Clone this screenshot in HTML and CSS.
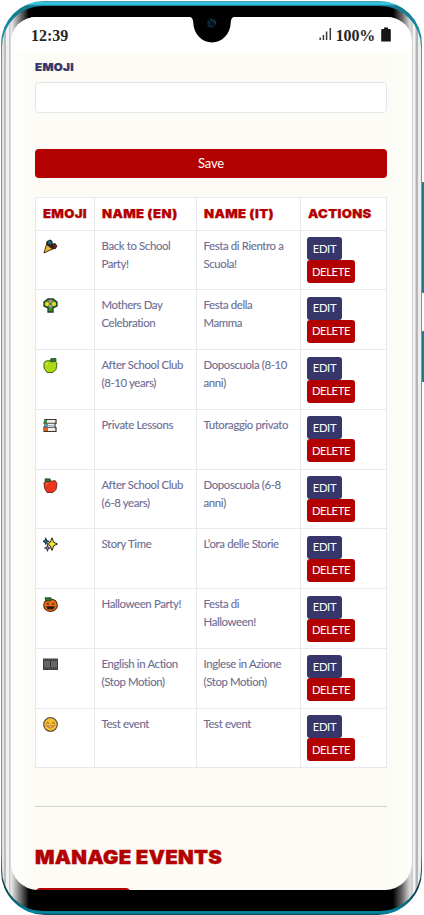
FILE: index.html
```html
<!DOCTYPE html>
<html lang="en">
<head>
<meta charset="utf-8">
<title>Manage Events</title>
<link rel="stylesheet" href="styles.css">
</head>
<body>
<div class="phone">
  <i class="side-key volume"></i><i class="side-key power"></i>
  <div class="shell"><div class="frame">
    <div class="screen">
      <header class="status">
        <span class="clock">12:39</span>
        <span class="indicators">
          <svg class="signal" width="13" height="14" viewBox="0 0 13 14"><path d="M1.2 13v-2.5M4.4 13V8M7.6 13V4.500M11.300 13V1" stroke="#3a3a3a" stroke-width="1.5"/></svg>
          <span class="percent">100%</span>
          <svg class="battery" width="10" height="15" viewBox="0 0 10 15"><path d="M3 .5h4v1.500h1.500q1.300 0 1.300 1.300V14.500H.2V3.300Q.2 2 1.500 2H3z" fill="#161616"/></svg>
        </span>
      </header>
      <main class="content">
        <label class="label" for="emoji"><span class="wide">EMOJI</span></label>
        <input class="field" id="emoji">
        <button class="save">Save</button>
        <div class="table">
          <div class="cell th"><span class="wide">EMOJI</span></div><div class="cell th"><span class="wide">NAME (EN)</span></div><div class="cell th"><span class="wide">NAME (IT)</span></div><div class="cell th"><span class="wide">ACTIONS</span></div>

          <div class="cell"><svg class="emoji" viewBox="0 0 15 15"><path d="M3 4l1-2 3-1.500L9.500 2v2.500L12 4l2.500 3-2 3-5 .5-4-3z" fill="#222"/><path d="M4.500 3L7 1.500 8.500 3 8 5.500 5.500 5z" fill="#216b83"/><path d="M9 6.500l3-1.500 2 2-2 2.200z" fill="#722014"/><path d="M3.500 5.500L9.500 10 1 14z" fill="#efb431" stroke="#443414"/></svg></div>
          <div class="cell text">Back to School<br>Party!</div><div class="cell text">Festa di Rientro a<br>Scuola!</div>
          <div class="cell actions"><button class="edit">EDIT</button><button class="delete">DELETE</button></div>

          <div class="cell"><svg class="emoji" viewBox="0 0 15 15"><path d="M5 1h5l4 3v4l-4 2v4H5v-4L1 8V4z" fill="#37943b" stroke="#203b20" stroke-width="1.300"/><circle cx="4" cy="6" r="2" fill="#f3df20"/><circle cx="11" cy="6" r="2" fill="#f3df20"/><circle cx="7.500" cy="3.300" r="1.700" fill="#e477a4"/><circle cx="7.500" cy="8" r="1.600" fill="#e477a4"/></svg></div>
          <div class="cell text">Mothers Day<br>Celebration</div><div class="cell text">Festa della<br>Mamma</div>
          <div class="cell actions"><button class="edit">EDIT</button><button class="delete">DELETE</button></div>

          <div class="cell"><svg class="emoji" viewBox="0 0 15 15"><path d="M2 3.500l3-1 3 1 4-1 2 3-1 6-3 3H4L1 10V5z" fill="#aadb12" stroke="#47651c"/><path d="M7 3l1-2.500h5V3L9 4z" fill="#267b2b" stroke="#22401c" stroke-width=".7"/><path d="M3 5.500l2-.7-1.500 3z" fill="#dcf36c"/></svg></div>
          <div class="cell text">After School Club<br>(8-10 years)</div><div class="cell text">Doposcuola (8-10<br>anni)</div>
          <div class="cell actions"><button class="edit">EDIT</button><button class="delete">DELETE</button></div>

          <div class="cell"><svg class="emoji" viewBox="0 0 15 15"><path d="M2 1.500h11v4h-1v4h1v4H1V9h1V5H1z" fill="#eee" stroke="#3c3429" stroke-width="1.200"/><path d="M1 2h3v3H1z" fill="#3e9044"/><path d="M2 6h3v3H2z" fill="#4b9dc2"/><path d="M1 10h4v3H1z" fill="#e75b20"/><path d="M2 5.300h11M2 9.300h11" stroke="#594d3b"/><path d="M5 7.500h7" stroke="#88bdd1"/></svg></div>
          <div class="cell text">Private Lessons</div><div class="cell text">Tutoraggio privato</div>
          <div class="cell actions"><button class="edit">EDIT</button><button class="delete">DELETE</button></div>

          <div class="cell"><svg class="emoji" viewBox="0 0 15 15"><path d="M2 3.500l3-1 3 1 4-1 2 3-1 6-3 3H4L1.500 10 1 5z" fill="#ee341b" stroke="#733029"/><path d="M2 .8h5L8 3 4 4 2 3z" fill="#287b2b" stroke="#203c1c" stroke-width=".7"/><path d="M3 5.500l2-.7-1.500 3z" fill="#ff7755"/></svg></div>
          <div class="cell text">After School Club<br>(6-8 years)</div><div class="cell text">Doposcuola (6-8<br>anni)</div>
          <div class="cell actions"><button class="edit">EDIT</button><button class="delete">DELETE</button></div>

          <div class="cell"><svg class="emoji" viewBox="0 0 15 15"><path d="M2.800 1.500l.9 2 2 .8-2 .9-.9 2-.8-2-2-.9 2-.8z" fill="#2988a8" stroke="#153642" stroke-width="1.100"/><path d="M4.500 8.500l.8 1.700 1.700.8-1.700.8-.8 1.900-.8-1.900L2 11l1.700-.8z" fill="#c485b0" stroke="#47354b" stroke-width="1.100"/><path d="M9 .8l1.700 4.500L14.500 7l-3.800 1.700L9 13.500 7.300 8.700 4 7l3.300-1.700z" fill="#f7e52b" stroke="#292716"/></svg></div>
          <div class="cell text">Story Time</div><div class="cell text">L’ora delle Storie</div>
          <div class="cell actions"><button class="edit">EDIT</button><button class="delete">DELETE</button></div>

          <div class="cell"><svg class="emoji" viewBox="0 0 15 15"><ellipse cx="7.500" cy="8.200" rx="6.800" ry="6.200" fill="#ee6b12" stroke="#57301a" stroke-width="1.200"/><path d="M2 .8h6v3H3z" fill="#258130" stroke="#1b351a" stroke-width=".8"/><path d="M3.500 7.500L5 5.500l1.200 2zM8.800 7.500L10 5.500l1.500 2zM3 9l2 .6 1-.6 1.500.6L9 9l1 .6L12 9l-1.500 3-1.500.5-1.500-.6-1.500.6-1.500-.5z" fill="#231815"/></svg></div>
          <div class="cell text">Halloween Party!</div><div class="cell text">Festa di<br>Halloween!</div>
          <div class="cell actions"><button class="edit">EDIT</button><button class="delete">DELETE</button></div>

          <div class="cell"><svg class="emoji" viewBox="0 0 15 15"><path d="M0 1.500h15v11.500H0z" fill="#3d3d3d"/><path d="M1 4h13v6.500H1z" fill="#666"/><path d="M7.500 4v6.500" stroke="#333"/><path d="M1 2.800h13M1 11.800h13" stroke="#666" stroke-dasharray="1 1"/></svg></div>
          <div class="cell text">English in Action<br>(Stop Motion)</div><div class="cell text">Inglese in Azione<br>(Stop Motion)</div>
          <div class="cell actions"><button class="edit">EDIT</button><button class="delete">DELETE</button></div>

          <div class="cell"><svg class="emoji" viewBox="0 0 15 15"><circle cx="7.500" cy="7.500" r="6.800" fill="#fbc02e" stroke="#655b43" stroke-width="1.300"/><path d="M3.300 6.500q1.400-2 2.800 0M8.900 6.500q1.400-2 2.800 0" fill="none" stroke="#694522" stroke-width=".9"/><path d="M4.300 9h6.400q-3.200 4-6.400 0z" fill="#fff0cb" stroke="#9c4a20" stroke-width=".8"/><path d="M2.500 8.500h2M10.500 8.500h2" stroke="#f37a32" stroke-width="1.500"/></svg></div>
          <div class="cell text">Test event</div><div class="cell text">Test event</div>
          <div class="cell actions"><button class="edit">EDIT</button><button class="delete">DELETE</button></div>
        </div>
        <hr class="rule">
        <h2 class="title"><span class="wide">MANAGE EVENTS</span></h2>
        <div class="next-button"></div>
      </main>
    </div>
  </div></div>
  <svg class="notch" width="52" height="30" viewBox="0 0 52 30"><path d="M0 0h52v3.500h-1.500c-4 0-5.500 2-5.700 6C44.300 21 36 29.500 26 29.500S7.700 21 7.200 9.500C7 5.500 5.500 3.500 1.500 3.500H0z" fill="#000"/><circle cx="25.500" cy="10" r="5" fill="#07131b"/><path d="M22 8l2 3M24 6l5 4M22 12l4 2M28 7l2 4" stroke="#15475b" stroke-width="1"/></svg>
</div>
</body>
</html>
```
FILE: styles.css
```css
* { box-sizing: border-box; }
html, body { margin: 0; width: 424px; height: 915px; overflow: hidden; background: #fff; }
button, input { margin: 0; padding: 0; border: 0; font: inherit; }
.phone { position: relative; width: 424px; height: 915px; padding: 1px 2px 0 1px; }
.shell {
  position: relative; height: 914px; padding: 5px 1px 4px; border-radius: 43px 43px 44px 44px;
  background: linear-gradient(#687d82 0, #22bfdb 1px, #42cbe3 3px, #12798f 5px, #168ba5 30px, #829197 60px, #829197 850px, #00333f 885px, #06849e 912px, #123d47 914px);
}
.frame {
  height: 905px; padding: 11px 9px 20px; border-radius: 41px;
  background: linear-gradient(90deg, #e2e2e2 0 2px, #bfbfbf 2px 4px, #f1f1f1 4px 6.5px, #c9c9c9 7px 8px, #eee 9px, #777 18px, #000 27px, #000 391px, #666 400px, #ddd 408px, #d0d0d0 409px 411px, #f4f4f4 411px 413px, #b5b5b5 414px 416px, #eee 416.5px 419px);
}
.screen { height: 873px; overflow: hidden; border-radius: 25px 25px 27px 27px; background: linear-gradient(90deg, #fff, #fcfbf5 22px, #fcfbf5 379px, #fefefa); }
.side-key { position: absolute; left: 421px; width: 3px; border-radius: 2px 0 0 2px; background: #24788a; }
.volume { top: 182px; height: 111px; }
.power { top: 331px; height: 51px; }
.notch { position: absolute; left: 186px; top: 13px; }
.status { display: flex; justify-content: space-between; height: 35px; padding: 10px 21px 0 20px; background: #fff; font: bold 16px/17px "Liberation Serif", serif; color: #252525; }
.indicators { display: flex; gap: 4px; }
.percent { letter-spacing: -.2px; }
.battery { margin-left: 2px; }
.content { padding: 9px 25px 0 24px; color: #6c6c91; font: 11.4px/18px Lato, sans-serif; }
.wide { display: inline-block; transform-origin: 0 50%; }
.label { display: block; height: 21px; color: #37366b; font: 900 10.5px/14px Inter, sans-serif; letter-spacing: .3px; -webkit-text-stroke: .2px #37366b; }
.label .wide { transform: scaleX(1.1); }
.field { display: block; width: 352px; height: 31px; border: 1px solid #e3e6e8; border-radius: 4px; background: #fff; }
.save { display: block; width: 352px; height: 29px; margin-top: 36px; padding-bottom: 1px; border-radius: 4px; background: #b30000; color: #fff; font-size: 13px; letter-spacing: -.2px; }
.table { display: grid; grid-template-columns: 59px 102px 104px 87px; grid-template-rows: 32.5px repeat(9, 59.75px); width: 352px; height: 571px; margin-top: 19px; border-right: 1px solid #e5e8eb; border-bottom: 1px solid #e5e8eb; background: #fff; }
.cell { padding: 6px 0 0 6.500px; border: solid #e6e9ed; border-width: 1px 0 0 1.5px; }
.th { padding-top: 7px; color: #b30000; font: 900 12.2px/17px Inter, sans-serif; letter-spacing: .3px; white-space: nowrap; -webkit-text-stroke: .25px #b30000; }
.th .wide { transform: scaleX(1.075); }
.text { letter-spacing: -.37px; white-space: nowrap; -webkit-text-stroke: .1px #6c6c91; }
.emoji { display: block; width: 15px; height: 15px; margin: 2px 0 0 .5px; }
.actions { display: flex; flex-direction: column; align-items: flex-start; padding: 6.5px 0 0 6px; }
.edit, .delete { height: 23px; border-radius: 3px; color: #fff; font-size: 11.2px; letter-spacing: -.35px; }
.edit { width: 35px; background: #37366b; }
.delete { width: 48px; background: #b30000; }
.rule { height: 1px; margin: 38px 0 0; border: 0; background: #d3d3cf; }
.title { margin: 39px 0 0; height: 22px; color: #b30000; font: 900 18.5px/22px Inter, sans-serif; letter-spacing: .3px; white-space: nowrap; -webkit-text-stroke: .4px #b30000; }
.title .wide { transform: scaleX(1.102); }
.next-button { width: 94px; height: 30px; margin: 20px 0 0 1px; border-radius: 4px; background: #b30000; }
```
